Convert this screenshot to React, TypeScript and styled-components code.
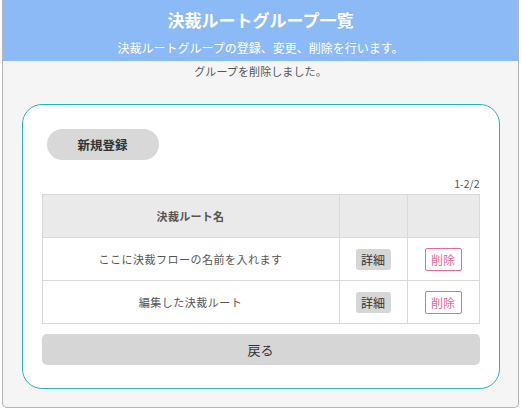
import React from "react";
import styled, { createGlobalStyle } from "styled-components";

const Global = createGlobalStyle`
  html, body { margin: 0; padding: 0; background: #ffffff; }
  body { font-family: "Noto Sans CJK JP", "Noto Sans", sans-serif; }
`;

const Page = styled.div`
  margin: 0 3px 0 2px;
  height: 408px;
  box-sizing: border-box;
  border: 1px solid #b4b4b4;
  border-top: none;
  border-radius: 0 0 5px 5px;
  background: #f5f5f5;
  display: flex;
  flex-direction: column;
`;

const Header = styled.header`
  height: 61px;
  background: #8cbaf6;
  color: #ffffff;
  display: flex;
  flex-direction: column;
  align-items: center;
`;

const Title = styled.h1`
  margin: 7px 0 0;
  font-size: 17px;
  line-height: 25px;
  font-weight: 700;
`;

const Subtitle = styled.p`
  margin: 7px 0 0;
  font-size: 12px;
  line-height: 18px;
`;

const Message = styled.p`
  margin: 2px 0 0;
  font-size: 11px;
  line-height: 16px;
  color: #555555;
  text-align: center;
  letter-spacing: 0.1px;
`;

const Card = styled.section`
  margin: 25px auto 0;
  width: 478px;
  box-sizing: border-box;
  background: #ffffff;
  border: 1px solid #2ab3b5;
  border-radius: 20px;
  padding: 24px 19px 23px 19px;
  display: flex;
  flex-direction: column;
`;

const NewButton = styled.button`
  align-self: flex-start;
  margin-left: 5px;
  width: 112px;
  height: 31px;
  border: none;
  border-radius: 16px;
  background: #d8d8d8;
  color: #333333;
  font-family: inherit;
  font-size: 12.5px;
  font-weight: 700;
  cursor: pointer;
`;

const Count = styled.div`
  margin-top: 17px;
  text-align: right;
  font-size: 10.5px;
  line-height: 14px;
  color: #555555;
`;

const Table = styled.table`
  margin-top: 3px;
  width: 100%;
  border-collapse: collapse;
  table-layout: fixed;
`;

const Th = styled.th<{ $w?: number }>`
  width: ${(p) => (p.$w ? `${p.$w}px` : "auto")};
  height: 42px;
  background: #eaeaea;
  border: 1px solid #d9d9d9;
  font-size: 11px;
  font-weight: 700;
  color: #555555;
  letter-spacing: 0.3px;
  padding: 0;
`;

const Td = styled.td`
  height: 42px;
  border: 1px solid #d9d9d9;
  text-align: center;
  font-size: 11px;
  color: #555555;
  letter-spacing: 0.5px;
  padding: 0;
`;

const DetailButton = styled.button`
  width: 35px;
  height: 21px;
  border: none;
  border-radius: 3px;
  background: #d6d6d6;
  color: #333333;
  font-family: inherit;
  font-size: 12px;
  padding: 0;
  cursor: pointer;
`;

const DeleteButton = styled.button`
  width: 37px;
  height: 23px;
  border: 1px solid #e8699b;
  border-radius: 2px;
  background: #ffffff;
  color: #e8699b;
  font-family: inherit;
  font-size: 12px;
  padding: 0;
  cursor: pointer;
`;

const BackButton = styled.button`
  margin-top: 10px;
  width: 100%;
  height: 31px;
  border: none;
  border-radius: 5px;
  background: #d6d6d6;
  color: #333333;
  font-family: inherit;
  font-size: 13px;
  cursor: pointer;
`;

const rows = ["ここに決裁フローの名前を入れます", "編集した決裁ルート"];

export default function App() {
  return (
    <>
      <Global />
      <Page>
        <Header>
          <Title>決裁ルートグループ一覧</Title>
          <Subtitle>決裁ルートグループの登録、変更、削除を行います。</Subtitle>
        </Header>
        <Message>グループを削除しました。</Message>
        <Card>
          <NewButton>新規登録</NewButton>
          <Count>1-2/2</Count>
          <Table>
            <thead>
              <tr>
                <Th>決裁ルート名</Th>
                <Th $w={67}></Th>
                <Th $w={71}></Th>
              </tr>
            </thead>
            <tbody>
              {rows.map((r) => (
                <tr key={r}>
                  <Td>{r}</Td>
                  <Td>
                    <DetailButton>詳細</DetailButton>
                  </Td>
                  <Td>
                    <DeleteButton>削除</DeleteButton>
                  </Td>
                </tr>
              ))}
            </tbody>
          </Table>
          <BackButton>戻る</BackButton>
        </Card>
      </Page>
    </>
  );
}
